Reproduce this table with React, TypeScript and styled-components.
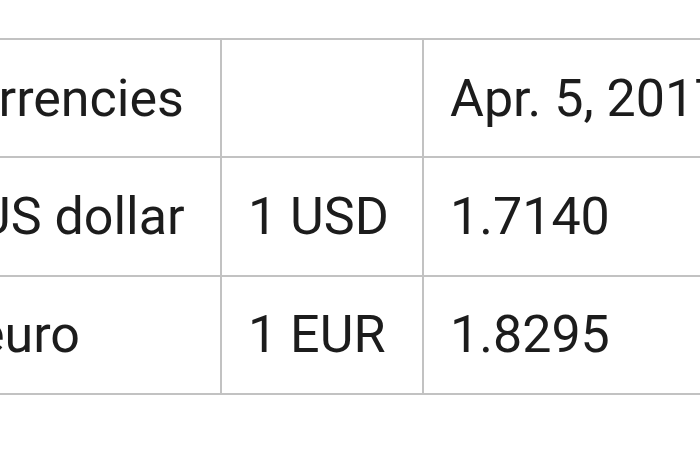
import styled, { createGlobalStyle } from "styled-components";

type Rate = {
  name: string;
  unit: string;
  value: string;
};

const rates: Rate[] = [
  { name: "US dollar", unit: "1 USD", value: "1.7140" },
  { name: "euro", unit: "1 EUR", value: "1.8295" },
];

export default function App() {
  return (
    <Page>
      <GlobalStyle />
      <RatesTable>
        <colgroup>
          <col style={{ width: 312 }} />
          <col style={{ width: 202 }} />
          <col style={{ width: 338 }} />
        </colgroup>
        <thead>
          <Row>
            <HeadCell>Currencies</HeadCell>
            <HeadCell />
            <HeadCell>Apr. 5, 2017</HeadCell>
          </Row>
        </thead>
        <tbody>
          {rates.map((rate) => (
            <Row key={rate.unit}>
              <Cell $indent>{rate.name}</Cell>
              <Cell>{rate.unit}</Cell>
              <Cell>{rate.value}</Cell>
            </Row>
          ))}
        </tbody>
      </RatesTable>
    </Page>
  );
}

const GlobalStyle = createGlobalStyle`
  html, body {
    margin: 0;
    background: #fff;
    overflow: hidden;
  }
`;

const Page = styled.div`
  width: 700px;
  height: 450px;
  overflow: hidden;
  padding-top: 38px;
  box-sizing: border-box;
  font-family: Roboto, "Liberation Sans", sans-serif;
  color: #1c1c1c;
`;

const RatesTable = styled.table`
  margin-left: -92px;
  border-collapse: collapse;
  table-layout: fixed;
  width: 852px;
`;

const Row = styled.tr`
  height: 118.4px;
`;

const Cell = styled.td<{ $indent?: boolean }>`
  border: 2px solid #c2c2c2;
  padding: 0 26px 0 ${(p) => (p.$indent ? "67px" : "26px")};
  font-size: 52px;
  font-weight: 400;
  text-align: left;
  white-space: nowrap;
  vertical-align: middle;
`;

const HeadCell = styled(Cell).attrs({ as: "th" })``;
